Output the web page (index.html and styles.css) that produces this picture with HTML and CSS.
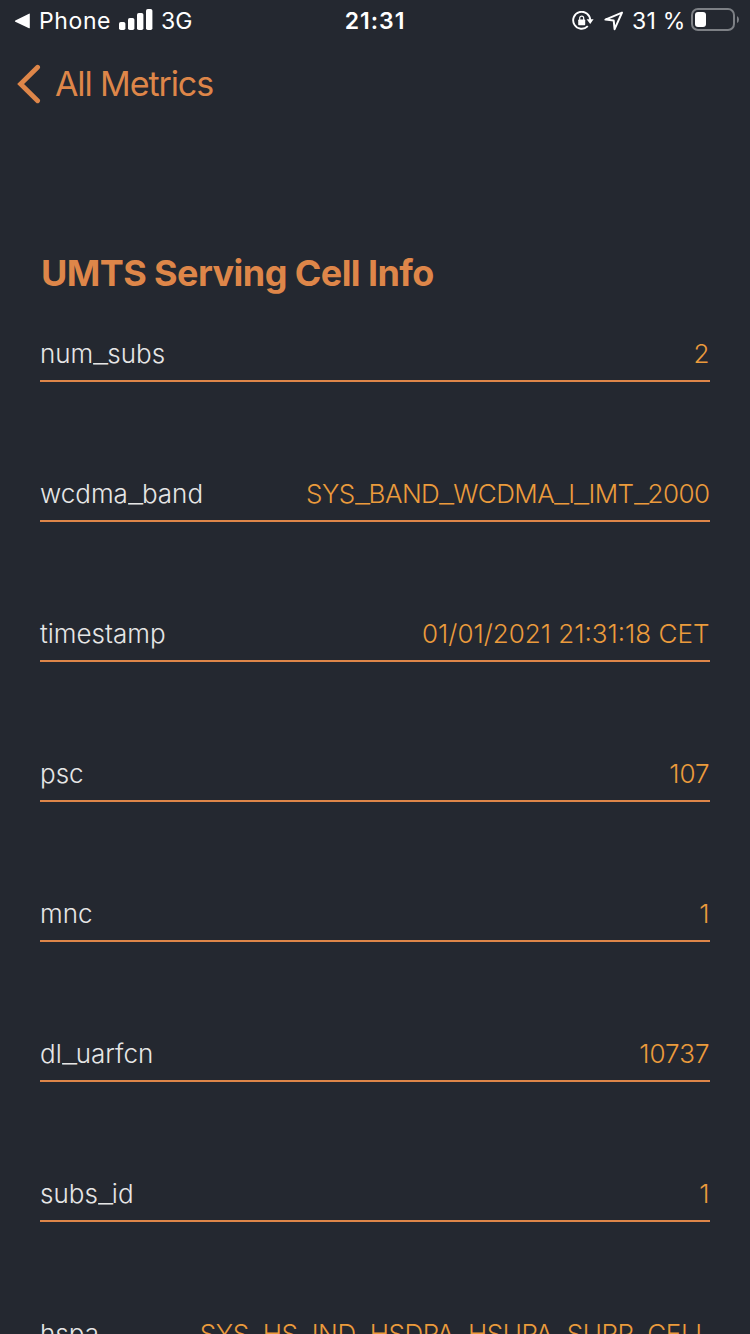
FILE: index.html
```html
<!DOCTYPE html>
<html lang="en">
<head>
<meta charset="utf-8">
<title>UMTS Serving Cell Info</title>
<link rel="stylesheet" href="styles.css">
</head>
<body>
<div class="screen">
  <header class="status">
    <div class="status-left">
      <svg class="back-app" width="16" height="16" viewBox="0 0 16 16"><path d="M15.8 1.2v13.6q0 .8-.8.4L1.3 8.7q-.9-.6 0-1.3L15 .7q.8-.4.8.5z" fill="#fff"/></svg>
      <span class="carrier">Phone</span>
      <svg class="signal" width="34" height="22" viewBox="0 0 34 22" fill="#fff"><rect x="0" y="13" width="6.4" height="8" rx="1.8"/><rect x="9" y="9" width="6.4" height="12" rx="1.8"/><rect x="18" y="4" width="6.4" height="17" rx="1.8"/><rect x="27" y="0" width="6.4" height="21" rx="1.8"/></svg>
      <span class="network">3G</span>
    </div>
    <div class="clock">21:31</div>
    <div class="status-right">
      <svg class="lock" width="22" height="20" viewBox="0 0 22 20"><path d="M18.2 9.2A8.5 8.5 0 1 0 15.8 15.2" fill="none" stroke="#fff" stroke-width="1.9"/><path d="M14.6 8.2h7L18.2 13z" fill="#fff"/><rect x="6.2" y="8.6" width="7" height="5.6" rx=".6" fill="#fff"/><path d="M7.7 9V7.2a2 2 0 0 1 4 0V9" fill="none" stroke="#fff" stroke-width="1.2"/></svg>
      <svg class="location" width="20" height="20" viewBox="0 0 20 20"><path d="M18 1.6 1.4 8.6l8.3.9.9 8.7z" fill="none" stroke="#fff" stroke-width="2" stroke-linejoin="round"/></svg>
      <span class="percent">31 %</span>
      <svg class="battery" width="49" height="24" viewBox="0 0 49 24"><rect x="1" y="1" width="42" height="21" rx="6" fill="none" stroke="#7d8085" stroke-width="2"/><rect x="4" y="4" width="11" height="15" rx="3" fill="#fff"/><path d="M46 8q2 1.2 2 3.6T46 15z" fill="#7d8085"/></svg>
    </div>
  </header>
  <nav class="nav">
    <svg class="chevron" width="24" height="40" viewBox="0 0 24 40"><path d="M20.6 3.2 3.6 20l17 16.8" fill="none" stroke="#de8649" stroke-width="4.8" stroke-linecap="round" stroke-linejoin="miter"/></svg>
    <span class="nav-title">All Metrics</span>
  </nav>
  <main class="content">
    <h1 class="title">UMTS Serving Cell Info</h1>
    <div class="row"><span class="key">num<i class="bar">_</i>subs</span><span class="value">2</span></div>
    <div class="row"><span class="key">wcdma<i class="bar">_</i>band</span><span class="value caps">SYS<i class="bar">_</i>BAND<i class="bar">_</i>WCDMA<i class="bar">_</i>I<i class="bar">_</i>IMT<i class="bar">_</i>2000</span></div>
    <div class="row"><span class="key">timestamp</span><span class="value">01/01/2021 21:31:18 CET</span></div>
    <div class="row"><span class="key">psc</span><span class="value">107</span></div>
    <div class="row"><span class="key">mnc</span><span class="value">1</span></div>
    <div class="row"><span class="key">dl<i class="bar">_</i>uarfcn</span><span class="value">10737</span></div>
    <div class="row"><span class="key">subs<i class="bar">_</i>id</span><span class="value">1</span></div>
    <div class="row"><span class="key">hspa</span><span class="value caps-wide">SYS<i class="bar">_</i>HS<i class="bar">_</i>IND<i class="bar">_</i>HSDPA<i class="bar">_</i>HSUPA<i class="bar">_</i>SUPP<i class="bar">_</i>CELL</span></div>
  </main>
</div>
</body>
</html>
```
FILE: styles.css
```css
* { box-sizing: border-box; }
body { margin: 0; background: #242830; }
.screen {
  width: 750px;
  height: 1334px;
  overflow: hidden;
  background: #242830;
  color: #fff;
  font-family: Inter, "Liberation Sans", sans-serif;
  white-space: nowrap;
}
svg { display: block; flex: none; }
.status {
  display: grid;
  grid-template-columns: 1fr auto 1fr;
  height: 40px;
  font-size: 23px;
  line-height: 42px;
}
.status-left, .status-right { display: flex; align-items: flex-start; }
.status-left { padding-left: 14px; }
.status-right { justify-content: flex-end; padding-right: 10px; }
.back-app { margin-top: 13px; }
.carrier { width: 79px; margin-left: 9px; letter-spacing: 0.6px; }
.signal { margin: 9px 8px 0 1px; }
.clock { font-weight: 600; letter-spacing: 1px; }
.lock { margin: 11px 10px 0 0; }
.location { margin: 11px 8px 0 0; }
.percent { width: 54px; margin-right: 5px; letter-spacing: 0.2px; }
.battery { margin-top: 8px; }
.nav {
  display: flex;
  align-items: center;
  height: 88px;
  padding-left: 17px;
  color: #de8649;
}
.nav-title { margin-left: 14px; font-size: 34px; line-height: 88px; letter-spacing: -1.1px; }
.content { padding: 124px 40px 0; }
.title {
  margin: 0;
  height: 68px;
  padding-left: 1px;
  color: #de8649;
  font-size: 36px;
  line-height: 43px;
  font-weight: 700;
  letter-spacing: -0.58px;
}
.row {
  display: flex;
  justify-content: space-between;
  height: 62px;
  padding-top: 14px;
  margin-bottom: 78px;
  border-bottom: 2px solid #de8649;
  font-size: 26px;
  line-height: 40px;
  font-weight: 300;
}
.key { color: #e6e6e6; }
.value { color: #eb9b3c; padding-right: 0.5px; }
.caps { letter-spacing: -0.55px; }
.caps-wide { letter-spacing: -0.4px; }
.bar {
  display: inline-block;
  width: 15px;
  margin-right: -1px;
  font-style: normal;
  letter-spacing: 0;
  transform: scaleX(1.3);
  transform-origin: left;
}
```
